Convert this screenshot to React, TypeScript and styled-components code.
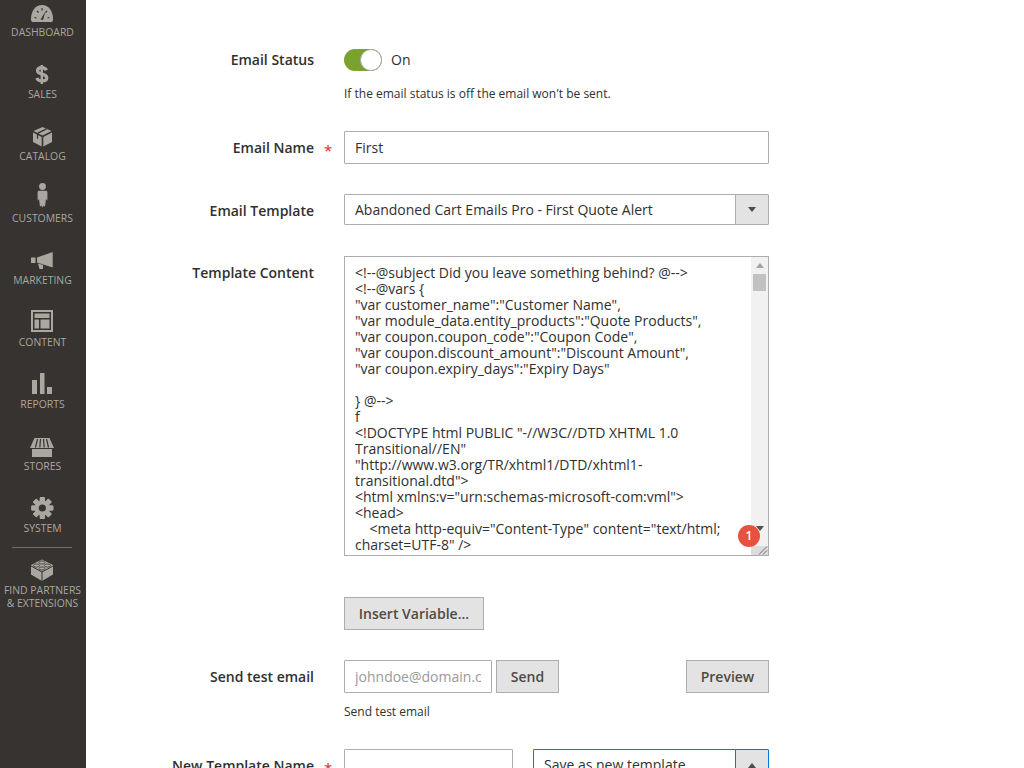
import React from 'react';
import styled, { createGlobalStyle } from 'styled-components';

const GlobalStyle = createGlobalStyle`
  html, body {
    margin: 0;
    padding: 0;
    height: 768px;
    overflow: hidden;
    background: #ffffff;
    font-family: "Open Sans", "Liberation Sans", sans-serif;
    color: #303030;
  }
`;

const Page = styled.div`
  display: flex;
  height: 768px;
  overflow: hidden;
`;

const Sidebar = styled.nav`
  flex: 0 0 86px;
  width: 86px;
  background: #373330;
  display: flex;
  flex-direction: column;
`;

const NavItem = styled.div`
  height: 62px;
  padding-right: 1px;
  display: flex;
  flex-direction: column;
  align-items: center;
  color: #aaa6a0;
`;

const NavIcon = styled.svg`
  display: block;
  width: 30px;
  height: 24px;
  overflow: visible;
  flex: none;
  margin-left: 1px;
  fill: #aaa6a0;
`;

const NavLabel = styled.div`
  margin-top: 2px;
  font-size: 10.4px;
  line-height: 13px;
  text-align: center;
  text-transform: uppercase;
  white-space: nowrap;
`;

const NavDivider = styled.div`
  height: 1px;
  margin: -11px 14px 10px 12px;
  background: #736e69;
`;

const Main = styled.main`
  flex: 1;
  padding-top: 49px;
`;

const Row = styled.div<{ $mt?: number }>`
  display: grid;
  grid-template-columns: 228px 30px 425px;
  margin-top: ${(p) => p.$mt ?? 30}px;
`;

const Label = styled.div<{ $pt?: number }>`
  padding-top: ${(p) => p.$pt ?? 7}px;
  font-size: 14px;
  line-height: 20px;
  font-weight: 600;
  text-align: right;
  white-space: nowrap;
`;

const Star = styled.div`
  padding: 9px 0 0 10px;
  font-size: 15px;
  line-height: 20px;
  color: #e22626;
`;

const Control = styled.div`
  grid-column: 3;
`;

const ToggleRow = styled.div`
  display: flex;
  align-items: center;
  gap: 9px;
  height: 22px;
  font-size: 14px;
  line-height: 20px;
`;

const ToggleText = styled.span`
  margin-top: -1px;
`;

const Toggle = styled.div`
  display: flex;
  justify-content: flex-end;
  box-sizing: border-box;
  width: 38px;
  height: 22px;
  border-radius: 11px;
  background: #79a22e;
`;

const Knob = styled.div`
  box-sizing: border-box;
  width: 22px;
  height: 22px;
  border-radius: 50%;
  background: #ffffff;
  border: 1px solid #adadad;
`;

const Hint = styled.div<{ $mt: number }>`
  margin-top: ${(p) => p.$mt}px;
  font-size: 12px;
  line-height: 17px;
  white-space: nowrap;
`;

const TextInput = styled.input<{ $w?: number }>`
  box-sizing: border-box;
  display: block;
  width: ${(p) => (p.$w ? `${p.$w}px` : '100%')};
  height: 33px;
  padding: 0 10px;
  border: 1px solid #adadad;
  border-radius: 1px;
  outline: none;
  background: #ffffff;
  font-family: inherit;
  font-size: 14px;
  color: #303030;
  &::placeholder {
    color: #9a9a9a;
    opacity: 1;
  }
`;

const Select = styled.div<{ $open?: boolean }>`
  box-sizing: border-box;
  display: flex;
  align-items: stretch;
  flex: ${(p) => (p.$open ? '0 0 236px' : '1')};
  height: ${(p) => (p.$open ? 33 : 31)}px;
  border: 1px solid ${(p) => (p.$open ? '#007bdb' : '#adadad')};
  border-radius: 1px;
  font-size: 14px;
  background: #ffffff;
`;

const SelectText = styled.div`
  flex: 1;
  padding-left: 10px;
  line-height: 29px;
  white-space: nowrap;
`;

const SelectArrow = styled.div<{ $open?: boolean }>`
  box-sizing: border-box;
  flex: 0 0 33px;
  display: flex;
  align-items: center;
  justify-content: center;
  background: #e3e3e3;
  border-left: 1px solid ${(p) => (p.$open ? '#007bdb' : '#adadad')};
  &::after {
    content: '';
    width: 0;
    height: 0;
    border-left: 4px solid transparent;
    border-right: 4px solid transparent;
    ${(p) => (p.$open ? 'border-bottom' : 'border-top')}: 5px solid #514943;
  }
`;

const TextareaBox = styled.div`
  position: relative;
  box-sizing: border-box;
  display: flex;
  height: 300px;
  border: 1px solid #adadad;
  overflow: hidden;
`;

const TextareaText = styled.div`
  flex: 1;
  padding: 8px 10px 0;
  font-size: 14px;
  line-height: 16px;
  white-space: pre-wrap;
  overflow: hidden;
  color: #303030;
`;

const Scrollbar = styled.div`
  flex: 0 0 17px;
  position: relative;
  display: flex;
  flex-direction: column;
  align-items: center;
  background: #f1f1f1;
`;

const ScrollUp = styled.div`
  margin-top: 6px;
  width: 0;
  height: 0;
  border-left: 4px solid transparent;
  border-right: 4px solid transparent;
  border-bottom: 5px solid #a3a3a3;
`;

const ScrollThumb = styled.div`
  margin-top: 6px;
  width: 13px;
  height: 17px;
  background: #c1c1c1;
`;

const ScrollDown = styled.div`
  margin-top: auto;
  margin-bottom: 24px;
  width: 0;
  height: 0;
  border-left: 4px solid transparent;
  border-right: 4px solid transparent;
  border-top: 5px solid #505050;
`;

const Resizer = styled.svg`
  position: absolute;
  right: 0;
  bottom: 0;
  width: 17px;
  height: 9px;
  background: #dcdcdc;
`;

const Badge = styled.div`
  position: absolute;
  left: 393px;
  top: 268px;
  width: 22px;
  height: 22px;
  border-radius: 50%;
  background: #e8503f;
  color: #ffffff;
  font-size: 12px;
  font-weight: 600;
  line-height: 22px;
  text-align: center;
`;

const Button = styled.button<{ $w: number }>`
  box-sizing: border-box;
  width: ${(p) => p.$w}px;
  height: 33px;
  padding: 0;
  border: 1px solid #adadad;
  border-radius: 0;
  background: #e3e3e3;
  font-family: inherit;
  font-size: 14px;
  font-weight: 600;
  color: #514943;
`;

const InlineControls = styled.div<{ $gap: number }>`
  display: flex;
  gap: ${(p) => p.$gap}px;
`;

const PushRight = styled.div`
  margin-left: auto;
`;

const templateContent = `<!--@subject Did you leave something behind? @-->
<!--@vars {
"var customer_name":"Customer Name",
"var module_data.entity_products":"Quote Products",
"var coupon.coupon_code":"Coupon Code",
"var coupon.discount_amount":"Discount Amount",
"var coupon.expiry_days":"Expiry Days"

} @-->
f
<!DOCTYPE html PUBLIC "-//W3C//DTD XHTML 1.0 Transitional//EN"
"http://www.w3.org/TR/xhtml1/DTD/xhtml1-transitional.dtd">
<html xmlns:v="urn:schemas-microsoft-com:vml">
<head>
    <meta http-equiv="Content-Type" content="text/html; charset=UTF-8" />`;

const gearTeeth = [0, 45, 90, 135, 180, 225, 270, 315];

const navItems: { label: React.ReactNode; icon: React.ReactNode }[] = [
  {
    label: 'Dashboard',
    icon: (
      <>
        <path d="M4.5 22C3.5 22 3 21 3 19 3 11 7.5 5 14 5s11 6 11 14c0 2-.5 3-1.5 3Z" />
        <path
          d="M6.5 17.5 8.5 18M9 11l1.5 1.5M14 8v2.5M19 11l-1.5 1.5M21.5 17.5 19.5 18"
          stroke="#373330"
          strokeWidth="1.2"
        />
        <path d="M12.5 19.5 17.5 11.5 15 20Z" fill="#373330" />
      </>
    ),
  },
  {
    label: 'Sales',
    icon: (
      <g fill="none" stroke="#aaa6a0">
        <path
          strokeWidth="3.2"
          d="M18.5 8.3C17.5 6.3 15.8 5.6 13.7 5.6 11 5.6 9.5 6.9 9.5 8.7c0 4.5 9.3 2.3 9.3 7 0 2.1-1.9 3.3-5 3.3-2.5 0-4.2-.9-5-3"
        />
        <path strokeWidth="2.4" d="M13.8 3v19" />
      </g>
    ),
  },
  {
    label: 'Catalog',
    icon: (
      <>
        <path d="M14.5 3 23.5 7 14.5 11.5 5.5 7Z" />
        <path d="M5 8.5 13.7 13v9.5L5 18Z" />
        <path d="M15.3 13 24 8.5V18l-8.7 4.5Z" />
        <path d="M9.5 9.3 18.5 4.8" stroke="#373330" strokeWidth="1.4" fill="none" />
        <path d="M9.5 9.8v5" stroke="#373330" strokeWidth="1.2" fill="none" />
      </>
    ),
  },
  {
    label: 'Customers',
    icon: (
      <>
        <circle cx="14.5" cy="0.5" r="3.4" />
        <path d="M11 4.8h7c.9 0 1.4.6 1.4 1.6v8.4l-1.4-1.8-1 7.8-1.2-1.4-1.3 2.2-1.3-2.2-1.2 1.4-1-7.8-1.4 1.8V6.4c0-1 .5-1.6 1.4-1.6Z" />
      </>
    ),
  },
  {
    label: 'Marketing',
    icon: (
      <>
        <path d="M9 9.5 24.7 4v15.5L9 14.5Z" />
        <path d="M3 9.5h4.5v5.5H3Z" />
        <path d="M10 15.5l5 1.6v3.9h-3.5Z" />
      </>
    ),
  },
  {
    label: 'Content',
    icon: (
      <>
        <path fillRule="evenodd" d="M3 0h22v22H3ZM5 2v18h18V2Z" />
        <path d="M6.5 3.5h15V8h-15ZM6.5 9.5H11v9H6.5ZM12.5 9.5h9v9h-9Z" />
      </>
    ),
  },
  {
    label: 'Reports',
    icon: <path d="M4 8h5v14H4ZM12 1h4.5v21H12ZM19 15h5v7h-5Z" />,
  },
  {
    label: 'Stores',
    icon: (
      <>
        <path d="M6.5 4h15L26 14H2Z" />
        <path d="M4 15h20v8H4Z" />
        <path
          d="M9.5 5 7.5 13.5M12.5 5 11.8 13.5M15.5 5 16.2 13.5M18.5 5 20.5 13.5"
          stroke="#373330"
          strokeWidth="1.2"
        />
      </>
    ),
  },
  {
    label: 'System',
    icon: (
      <>
        {gearTeeth.map((deg) => (
          <rect key={deg} x="11.8" y="1" width="5" height="22" rx="1" transform={`rotate(${deg} 14.3 12)`} />
        ))}
        <circle cx="14.3" cy="12" r="7.6" />
        <circle cx="14.3" cy="12" r="3.6" fill="#373330" />
      </>
    ),
  },
];

const partnersIcon = (
  <>
    <path d="M3 7 14 1.5 25 7v9.5L14 23 3 16.5Z" />
    <path d="M3 8 14 14 25 8M14 14v9" fill="none" stroke="#373330" strokeWidth="1" />
    <ellipse cx="14" cy="4.5" rx="3" ry="1.6" stroke="#373330" strokeWidth=".8" />
    <ellipse cx="8.5" cy="7.5" rx="3" ry="1.6" stroke="#373330" strokeWidth=".8" />
    <ellipse cx="19.5" cy="7.5" rx="3" ry="1.6" stroke="#373330" strokeWidth=".8" />
    <ellipse cx="14" cy="10.5" rx="3" ry="1.6" stroke="#373330" strokeWidth=".8" />
  </>
);

const App: React.FC = () => (
  <Page>
    <GlobalStyle />
    <Sidebar>
      {navItems.map((item, i) => (
        <NavItem key={i}>
          <NavIcon viewBox="0 0 30 24">{item.icon}</NavIcon>
          <NavLabel>{item.label}</NavLabel>
        </NavItem>
      ))}
      <NavDivider />
      <NavItem>
        <NavIcon viewBox="0 0 30 24">{partnersIcon}</NavIcon>
        <NavLabel>
          Find Partners
          <br />& Extensions
        </NavLabel>
      </NavItem>
    </Sidebar>
    <Main>
      <Row $mt={0}>
        <Label $pt={1}>Email Status</Label>
        <Control>
          <ToggleRow>
            <Toggle>
              <Knob />
            </Toggle>
            <ToggleText>On</ToggleText>
          </ToggleRow>
          <Hint $mt={14}>If the email status is off the email won't be sent.</Hint>
        </Control>
      </Row>
      <Row $mt={29}>
        <Label>Email Name</Label>
        <Star>*</Star>
        <TextInput value="First" readOnly />
      </Row>
      <Row>
        <Label>Email Template</Label>
        <Control>
          <Select>
            <SelectText>Abandoned Cart Emails Pro - First Quote Alert</SelectText>
            <SelectArrow />
          </Select>
        </Control>
      </Row>
      <Row $mt={31}>
        <Label>Template Content</Label>
        <Control>
          <TextareaBox>
            <TextareaText>{templateContent}</TextareaText>
            <Scrollbar>
              <ScrollUp />
              <ScrollThumb />
              <ScrollDown />
              <Resizer viewBox="0 0 17 9">
                <path d="M8 8.5 16 .5M12 8.5 16 4.5" stroke="#6b6b6b" strokeWidth="1" fill="none" />
              </Resizer>
            </Scrollbar>
            <Badge>1</Badge>
          </TextareaBox>
        </Control>
      </Row>
      <Row $mt={41}>
        <Control>
          <Button $w={140}>Insert Variable...</Button>
        </Control>
      </Row>
      <Row>
        <Label>Send test email</Label>
        <Control>
          <InlineControls $gap={4}>
            <TextInput $w={148} placeholder="johndoe@domain.com" />
            <Button $w={63}>Send</Button>
            <PushRight>
              <Button $w={83}>Preview</Button>
            </PushRight>
          </InlineControls>
          <Hint $mt={10}>Send test email</Hint>
        </Control>
      </Row>
      <Row $mt={29}>
        <Label>New Template Name</Label>
        <Star>*</Star>
        <InlineControls $gap={20}>
          <TextInput $w={169} readOnly />
          <Select $open>
            <SelectText>Save as new template</SelectText>
            <SelectArrow $open />
          </Select>
        </InlineControls>
      </Row>
    </Main>
  </Page>
);

export default App;
